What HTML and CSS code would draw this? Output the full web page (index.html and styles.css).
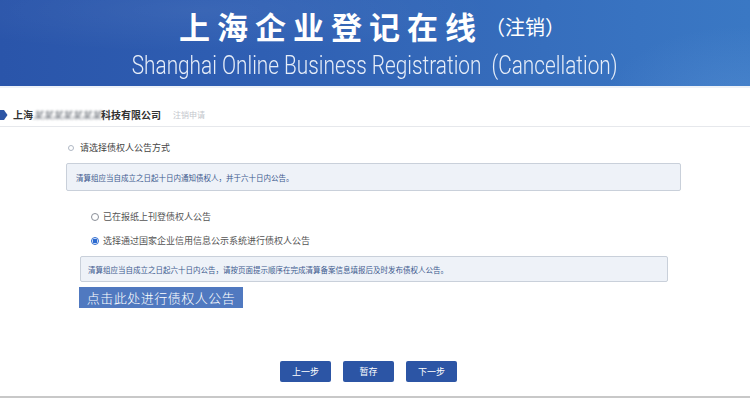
FILE: index.html
```html
<!DOCTYPE html>
<html lang="zh-CN">
<head>
<meta charset="utf-8">
<title>上海企业登记在线（注销）</title>
<link rel="stylesheet" href="styles.css">
</head>
<body>
<header class="banner">
  <div class="banner-title"><span class="title-main">上海企业登记在线</span><span class="title-sub">（注销）</span></div>
  <div class="banner-en"><span class="en-text">Shanghai Online Business Registration&nbsp;&nbsp;(Cancellation)</span></div>
</header>
<div class="company-bar">
  <svg class="marker" width="8" height="10" viewBox="0 0 8 10"><path d="M0 0 L4 0 L7.5 5 L4 10 L0 10 Z" fill="#2c55a5"/></svg>
  <span class="company">上海<span class="redacted">某某某某某某某</span>科技有限公司</span>
  <span class="crumb">注销申请</span>
</div>
<main class="content">
  <div class="section-title"><span class="dot"></span>请选择债权人公告方式</div>
  <div class="notice notice-1">清算组应当自成立之日起十日内通知债权人，并于六十日内公告。</div>
  <div class="options">
    <label class="option"><span class="radio"></span>已在报纸上刊登债权人公告</label>
    <label class="option"><span class="radio checked"></span>选择通过国家企业信用信息公示系统进行债权人公告</label>
  </div>
  <div class="notice notice-2">清算组应当自成立之日起六十日内公告，请按页面提示顺序在完成清算备案信息填报后及时发布债权人公告。</div>
  <button class="big-btn">点击此处进行债权人公告</button>
</main>
<footer class="actions">
  <button class="step-btn">上一步</button>
  <button class="step-btn">暂存</button>
  <button class="step-btn">下一步</button>
</footer>
<div class="bottom-line"></div>
</body>
</html>
```
FILE: styles.css
```css
html, body {
  margin: 0;
  padding: 0;
  width: 750px;
  height: 398px;
  overflow: hidden;
  background: #ffffff;
  font-family: "Noto Sans CJK SC", "Noto Sans", sans-serif;
}

.banner {
  height: 86px;
  background:
    radial-gradient(ellipse 420px 60px at 200px 10px, rgba(255,255,255,0.06), rgba(255,255,255,0) 70%),
    radial-gradient(ellipse 200px 120px at 740px 110px, rgba(120,170,230,0.25), rgba(255,255,255,0) 70%),
    linear-gradient(90deg, #2a55aa 0%, #2f5fb3 35%, #3469b9 60%, #3873c1 85%, #3a78c4 100%);
  border-bottom: 2px solid #eef2f8;
  display: flex;
  flex-direction: column;
  align-items: center;
  color: #ffffff;
}

.banner-title {
  margin-top: 4px;
  height: 42px;
  display: flex;
  align-items: center;
  padding-right: 6px;
}

.title-main {
  font-size: 31px;
  font-weight: 700;
  letter-spacing: 7px;
  line-height: 1;
}

.title-sub {
  font-size: 20px;
  font-weight: 400;
  line-height: 1;
  margin-left: 2px;
  margin-top: 4px;
}

.banner-en {
  height: 38px;
  display: flex;
  align-items: center;
  justify-content: center;
  width: 750px;
}

.en-text {
  display: inline-block;
  font-family: "Roboto", "Liberation Sans", sans-serif;
  font-weight: 300;
  font-size: 26px;
  line-height: 1;
  color: #e6edf8;
  white-space: nowrap;
  transform: scaleX(0.8);
}

.company-bar {
  height: 39px;
  box-sizing: border-box;
  padding-top: 15px;
  border-bottom: 1px solid #e6e8ec;
  display: flex;
  align-items: center;
}

.marker {
  margin-right: 5px;
}

.company {
  font-size: 10px;
  font-weight: 700;
  color: #333333;
}

.redacted {
  display: inline-block;
  font-weight: 400;
  color: #5f656e;
  filter: blur(0.9px);
  font-style: italic;
  letter-spacing: -0.3px;
}

.crumb {
  margin-left: 12px;
  font-size: 8px;
  color: #c3c6cc;
}

.content {
  display: flex;
  flex-direction: column;
  align-items: flex-start;
}

.section-title {
  margin-top: 15px;
  margin-left: 68px;
  font-size: 9px;
  color: #444444;
  display: flex;
  align-items: center;
  line-height: 12px;
}

.dot {
  width: 4px;
  height: 4px;
  border: 1px solid #b0b8c4;
  border-radius: 50%;
  margin-right: 6px;
}

.notice {
  box-sizing: border-box;
  background: #eef2f8;
  border: 1px solid #c9d0da;
  border-radius: 2px;
  font-size: 7.5px;
  color: #3d5a8e;
  display: flex;
  align-items: center;
}

.notice-1 {
  margin-top: 9px;
  margin-left: 66px;
  width: 615px;
  height: 28px;
  padding-left: 9px;
}

.options {
  margin-top: 20px;
  margin-left: 91px;
  display: flex;
  flex-direction: column;
  gap: 12px;
}

.option {
  font-size: 9px;
  color: #555555;
  display: flex;
  align-items: center;
  line-height: 12px;
}

.radio {
  width: 6px;
  height: 6px;
  border: 1px solid #8a8f98;
  border-radius: 50%;
  margin-right: 4px;
  box-sizing: content-box;
}

.radio.checked {
  border-color: #2c6ad0;
  background: radial-gradient(circle, #2c6ad0 0 2.2px, #ffffff 2.6px);
}

.notice-2 {
  margin-top: 9px;
  margin-left: 80px;
  width: 588px;
  height: 26px;
  padding-left: 7px;
}

.big-btn {
  margin-top: 5px;
  margin-left: 79px;
  width: 164px;
  height: 21px;
  border: none;
  background: #5079c0;
  color: #ffffff;
  font-family: "Noto Sans CJK SC", sans-serif;
  font-size: 13px;
  font-weight: 300;
  padding: 0;
  line-height: 21px;
  letter-spacing: 0.5px;
}

.actions {
  margin-top: 53px;
  display: flex;
  justify-content: center;
  gap: 12px;
  padding-right: 13px;
}

.step-btn {
  width: 51px;
  height: 21px;
  border: none;
  border-radius: 2px;
  background: #2c55a5;
  color: #ffffff;
  font-family: "Noto Sans CJK SC", sans-serif;
  font-size: 9px;
  padding: 0;
}

.bottom-line {
  margin-top: 14px;
  height: 2px;
  background: #c8c8c8;
}
```
